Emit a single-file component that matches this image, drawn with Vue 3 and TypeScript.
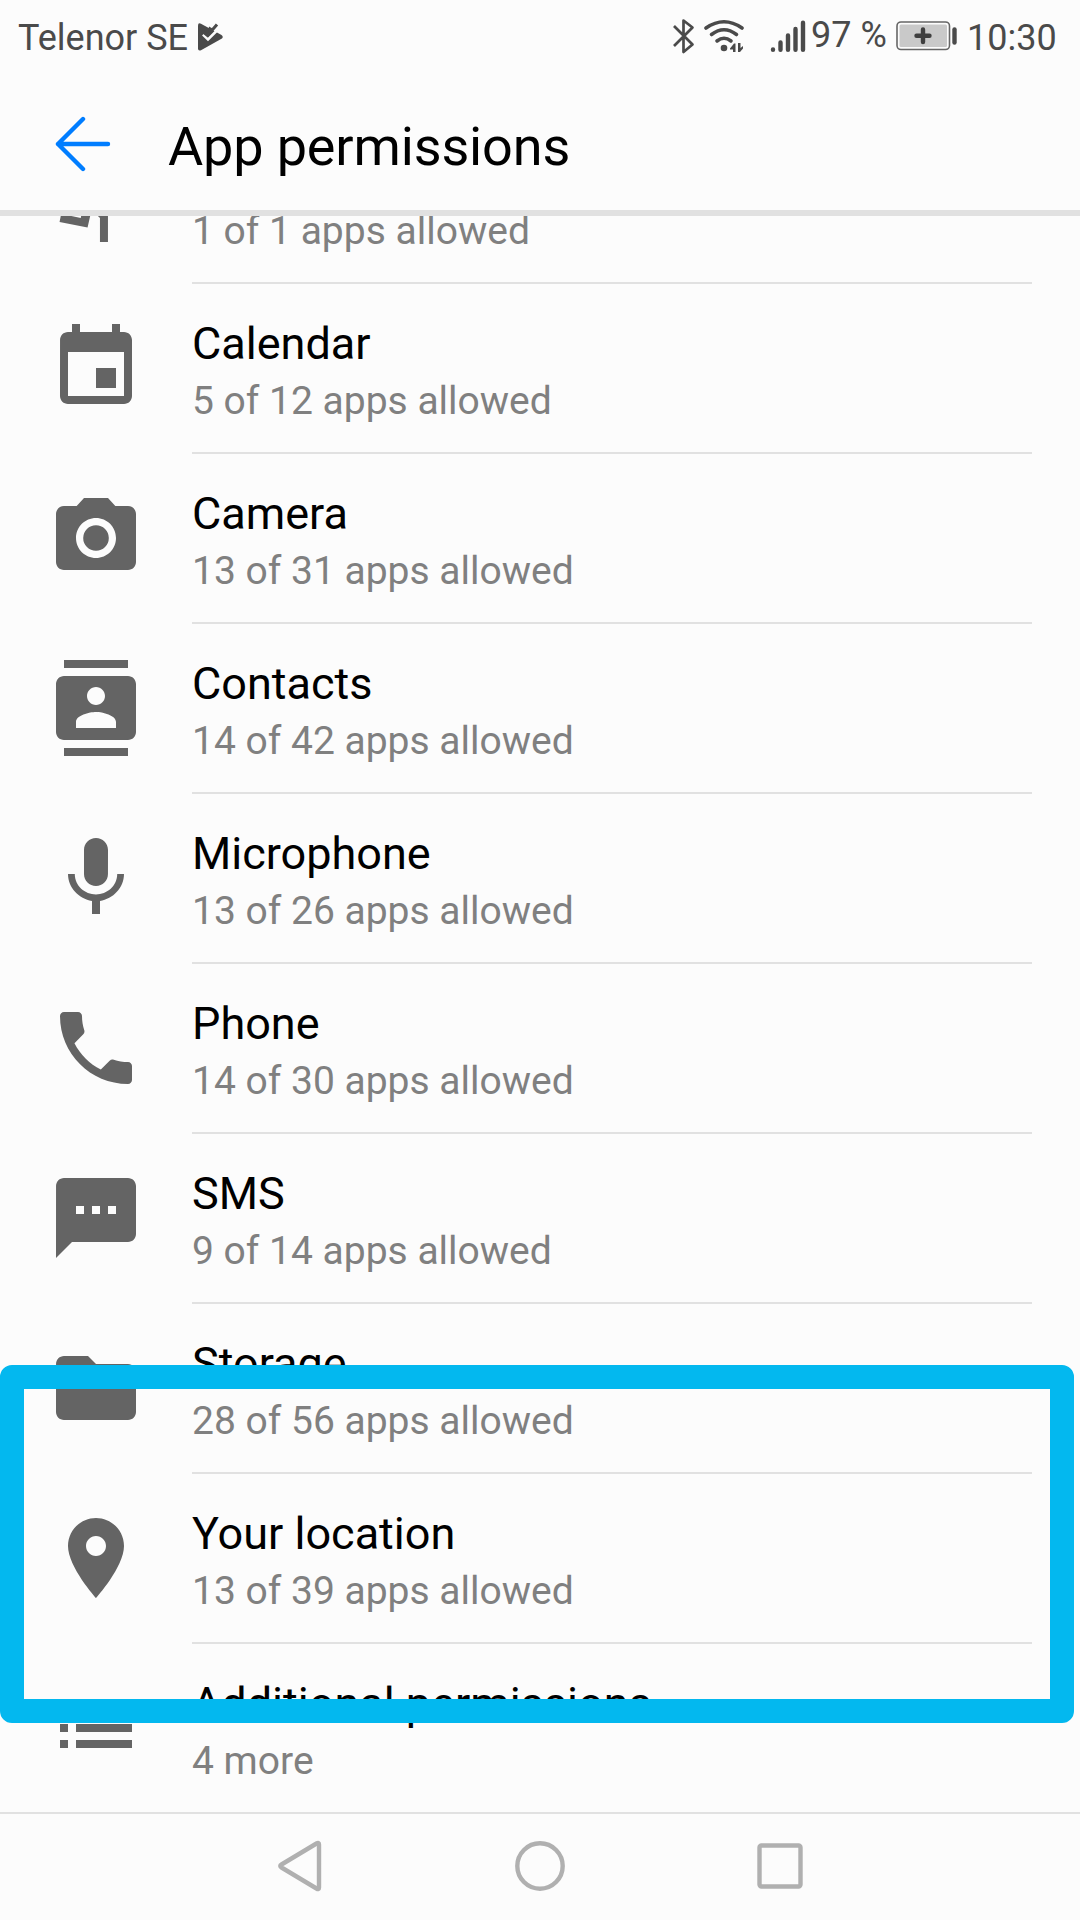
<script setup lang="ts">
interface Permission {
  name: string
  summary: string
  icon: string
}

const permissions: Permission[] = [
  {
    name: '',
    summary: '1 of 1 apps allowed',
    icon: 'M13.49 5.48c1.1 0 2-.9 2-2s-.9-2-2-2-2 .9-2 2 .9 2 2 2zm-3.6 13.9l1-4.4 2.1 2v6h2v-7.5l-2.1-2 .6-3c1.3 1.5 3.3 2.5 5.5 2.5v-2c-1.9 0-3.5-1-4.3-2.4l-1-1.6c-.4-.6-1-1-1.7-1-.3 0-.5.1-.8.1l-5.2 2.2v4.7h2v-3.4l1.8-.7-1.6 8.1-4.9-1-.4 2 7 1.4z',
  },
  {
    name: 'Calendar',
    summary: '5 of 12 apps allowed',
    icon: 'M17 12h-5v5h5v-5zM16 1v2H8V1H6v2H5c-1.11 0-1.99.9-1.99 2L3 19c0 1.1.89 2 2 2h14c1.1 0 2-.9 2-2V5c0-1.1-.9-2-2-2h-1V1h-2zm3 18H5V8h14v11z',
  },
  {
    name: 'Camera',
    summary: '13 of 31 apps allowed',
    icon: 'M12 8.8a3.2 3.2 0 1 0 0 6.4a3.2 3.2 0 1 0 0-6.4zM9 2L7.17 4H4c-1.1 0-2 .9-2 2v12c0 1.1.9 2 2 2h16c1.1 0 2-.9 2-2V6c0-1.1-.9-2-2-2h-3.17L15 2H9zm3 15c-2.76 0-5-2.24-5-5s2.24-5 5-5 5 2.24 5 5-2.24 5-5 5z',
  },
  {
    name: 'Contacts',
    summary: '14 of 42 apps allowed',
    icon: 'M20 0H4v2h16V0zM4 24h16v-2H4v2zM20 4H4c-1.1 0-2 .9-2 2v12c0 1.1.9 2 2 2h16c1.1 0 2-.9 2-2V6c0-1.1-.9-2-2-2zm-8 2.75c1.24 0 2.25 1.01 2.25 2.25s-1.01 2.25-2.25 2.25S9.75 10.24 9.75 9 10.76 6.75 12 6.75zM17 17H7v-1.5c0-1.67 3.33-2.5 5-2.5s5 .83 5 2.5V17z',
  },
  {
    name: 'Microphone',
    summary: '13 of 26 apps allowed',
    icon: 'M12 14c1.66 0 2.99-1.34 2.99-3L15 5c0-1.66-1.34-3-3-3S9 3.34 9 5v6c0 1.66 1.34 3 3 3zm5.3-3c0 3-2.54 5.1-5.3 5.1S6.7 14 6.7 11H5c0 3.41 2.72 6.23 6 6.72V21h2v-3.28c3.28-.48 6-3.3 6-6.72h-1.7z',
  },
  {
    name: 'Phone',
    summary: '14 of 30 apps allowed',
    icon: 'M6.62 10.79c1.44 2.83 3.76 5.14 6.59 6.59l2.2-2.2c.27-.27.67-.36 1.02-.24 1.12.37 2.33.57 3.57.57.55 0 1 .45 1 1V20c0 .55-.45 1-1 1-9.39 0-17-7.61-17-17 0-.55.45-1 1-1h3.5c.55 0 1 .45 1 1 0 1.25.2 2.45.57 3.57.11.35.03.74-.25 1.02l-2.2 2.2z',
  },
  {
    name: 'SMS',
    summary: '9 of 14 apps allowed',
    icon: 'M20 2H4c-1.1 0-1.99.9-1.99 2L2 22l4-4h14c1.1 0 2-.9 2-2V4c0-1.1-.9-2-2-2zM9 11H7V9h2v2zm4 0h-2V9h2v2zm4 0h-2V9h2v2z',
  },
  {
    name: 'Storage',
    summary: '28 of 56 apps allowed',
    icon: 'M10 4H4c-1.1 0-1.99.9-1.99 2L2 18c0 1.1.9 2 2 2h16c1.1 0 2-.9 2-2V8c0-1.1-.9-2-2-2h-8l-2-2z',
  },
  {
    name: 'Your location',
    summary: '13 of 39 apps allowed',
    icon: 'M12 2C8.13 2 5 5.13 5 9c0 5.25 7 13 7 13s7-7.75 7-13c0-3.87-3.13-7-7-7zm0 9.5c-1.38 0-2.5-1.12-2.5-2.5s1.12-2.5 2.5-2.5 2.5 1.12 2.5 2.5-1.12 2.5-2.5 2.5z',
  },
  {
    name: 'Additional permissions',
    summary: '4 more',
    icon: 'M3 13h2v-2H3v2zm0 4h2v-2H3v2zm0-8h2V7H3v2zm4 4h14v-2H7v2zm0 4h14v-2H7v2zM7 7v2h14V7H7z',
  },
]
</script>

<template>
  <div class="screen">
    <div class="status">
      <span class="carrier">Telenor SE</span>
      <svg class="play" width="27" height="30" viewBox="0 0 27 30">
        <path d="M1 3.5Q1 .5 4 1.7L24.500 13Q27 15 24.500 16.800L4 28.300Q1 29.300 1 26.500z" fill="#4a4a4a" />
        <path d="M6 12.500L11 17.500L23 5.500" fill="none" stroke="#fcfcfc" stroke-width="2.600" />
        <path d="M5 9L10.500 13.500L20 2.500" fill="none" stroke="#4a4a4a" stroke-width="3" />
        <path d="M12 4.500L15.500 6.500L11 11z" fill="#4a4a4a" />
      </svg>
      <span class="spacer"></span>
      <svg class="bt" width="24" height="36" viewBox="0 0 24 36">
        <path d="M2 8L20.500 26.500L11.500 34V2.500L20.500 9.500L2 28" fill="none" stroke="#4a4a4a" stroke-width="2.700" stroke-linejoin="round" />
      </svg>
      <svg class="wifi" width="42" height="36" viewBox="0 0 42 36">
        <g fill="none" stroke="#4a4a4a" stroke-width="3.600" stroke-linecap="round">
          <path d="M3 10Q21 -2.500 39 10" />
          <path d="M8.500 16.500Q21 7 33.500 16.500" />
          <path d="M14 23Q21 17.500 28 23" />
        </g>
        <circle cx="21" cy="30" r="3.300" fill="#4a4a4a" />
        <path d="M27 30.500L31 25.500H32.500V34H30V31.500H27zM35 25V34H37L40 30.500V28L37.500 30V25z" fill="#4a4a4a" />
      </svg>
      <svg class="signal" width="36" height="36" viewBox="0 0 36 36">
        <g stroke="#4a4a4a" stroke-width="4.400" stroke-linecap="round">
          <path d="M3 31.500V31.800M10.500 24.500V31.800M18 17.500V31.800M25.500 11V31.800M33 4.800V31.800" />
        </g>
      </svg>
      <span class="percent">97 %</span>
      <svg class="battery" width="62" height="30" viewBox="0 0 62 30">
        <rect x="1" y="1" width="52.500" height="27.500" rx="4" fill="none" stroke="#666" stroke-width="1.600" />
        <rect x="3.500" y="3.500" width="47.500" height="22.500" rx="1.500" fill="#c9c9c9" />
        <path d="M27 8.500V21M20.500 14.700H33.500" stroke="#3f3f3f" stroke-width="4.400" stroke-linecap="round" />
        <path d="M58.500 8.500V21.500" stroke="#4a4a4a" stroke-width="4.400" stroke-linecap="round" />
      </svg>
      <span class="clock">10:30</span>
    </div>

    <header class="bar">
      <svg class="back" width="56" height="56" viewBox="0 0 56 56">
        <path d="M28 3L3 28L28 53M3 28H53" fill="none" stroke="#007dff" stroke-width="4.400" stroke-linecap="round" stroke-linejoin="round" />
      </svg>
      <h1>App permissions</h1>
    </header>

    <main class="viewport">
      <ul class="list">
        <li v-for="item in permissions" :key="item.summary" class="row">
          <svg class="icon" width="96" height="96" viewBox="0 0 24 24">
            <path :d="item.icon" fill="#646464" />
          </svg>
          <div class="body">
            <div class="name">{{ item.name }}</div>
            <div class="summary">{{ item.summary }}</div>
          </div>
        </li>
      </ul>
    </main>

    <nav class="nav">
      <svg width="52" height="54" viewBox="0 0 52 54">
        <path d="M45 5.500Q45 3 42.500 4.500L7.500 25.500Q5 27 7.500 28.500L42.500 49.500Q45 51 45 48.500z" fill="none" stroke="#b0b0b0" stroke-width="4.400" />
      </svg>
      <svg width="52" height="54" viewBox="0 0 52 54">
        <circle cx="26" cy="27" r="22.700" fill="none" stroke="#b0b0b0" stroke-width="4.400" />
      </svg>
      <svg width="52" height="54" viewBox="0 0 52 54">
        <rect x="5.500" y="6.500" width="41" height="41" rx="2" fill="none" stroke="#b0b0b0" stroke-width="4.400" />
      </svg>
    </nav>

    <div class="highlight"></div>
  </div>
</template>

<style>
body {
  margin: 0;
  background: #fcfcfc;
}
</style>

<style scoped>
.screen {
  position: relative;
  display: flex;
  flex-direction: column;
  width: 1080px;
  height: 1920px;
  overflow: hidden;
  background: #fcfcfc;
  font-family: Roboto, "Liberation Sans", sans-serif;
}
.status {
  display: flex;
  align-items: flex-start;
  height: 76px;
  flex: none;
  box-sizing: border-box;
  padding: 0 25px 0 18px;
  color: #4a4a4a;
  font-size: 36px;
  line-height: 42px;
  white-space: nowrap;
}
.status svg {
  flex: none;
}
.carrier {
  width: 179px;
  margin-top: 17px;
}
.play {
  margin-top: 22px;
}
.spacer {
  flex: 1;
}
.bt {
  margin-top: 18px;
}
.wifi {
  margin: 18px 0 0 7px;
}
.signal {
  margin: 18px 0 0 25px;
}
.percent {
  width: 85px;
  margin: 14px 0 0 5px;
}
.battery {
  margin-top: 21px;
}
.clock {
  width: 88px;
  margin: 17px 0 0 9px;
}
.bar {
  display: flex;
  align-items: flex-start;
  flex: none;
  height: 140px;
  box-sizing: border-box;
  padding-left: 55px;
  border-bottom: 6px solid #e1e1e1;
}
.back {
  margin-top: 40px;
}
.bar h1 {
  margin: 39px 0 0 57px;
  color: #000;
  font-size: 54px;
  font-weight: 400;
  letter-spacing: -0.15px;
  line-height: 64px;
  white-space: nowrap;
}
.viewport {
  flex: none;
  height: 1596px;
  overflow: hidden;
}
.list {
  margin: -102px 0 0;
  padding: 0;
  list-style: none;
}
.row {
  display: flex;
  height: 170px;
  padding: 0 48px;
}
.icon {
  flex: none;
  margin: 36px 48px 0 0;
}
.body {
  flex: 1;
  box-sizing: border-box;
  padding-top: 33px;
  border-bottom: 2px solid #e1e1e1;
}
.row:last-child .body {
  border-bottom: 0;
}
.name {
  height: 54px;
  color: #000;
  font-size: 45px;
  line-height: 54px;
}
.summary {
  margin-top: 6px;
  color: #808080;
  font-size: 39px;
  line-height: 48px;
}
.nav {
  display: flex;
  align-items: center;
  justify-content: center;
  gap: 188px;
  flex: 1;
  border-top: 2px solid #e1e1e1;
  padding-bottom: 2px;
}
.highlight {
  position: absolute;
  left: 0;
  top: 1365px;
  width: 1074px;
  height: 358px;
  box-sizing: border-box;
  border: 24px solid #03b8ef;
  border-radius: 12px;
}
</style>
